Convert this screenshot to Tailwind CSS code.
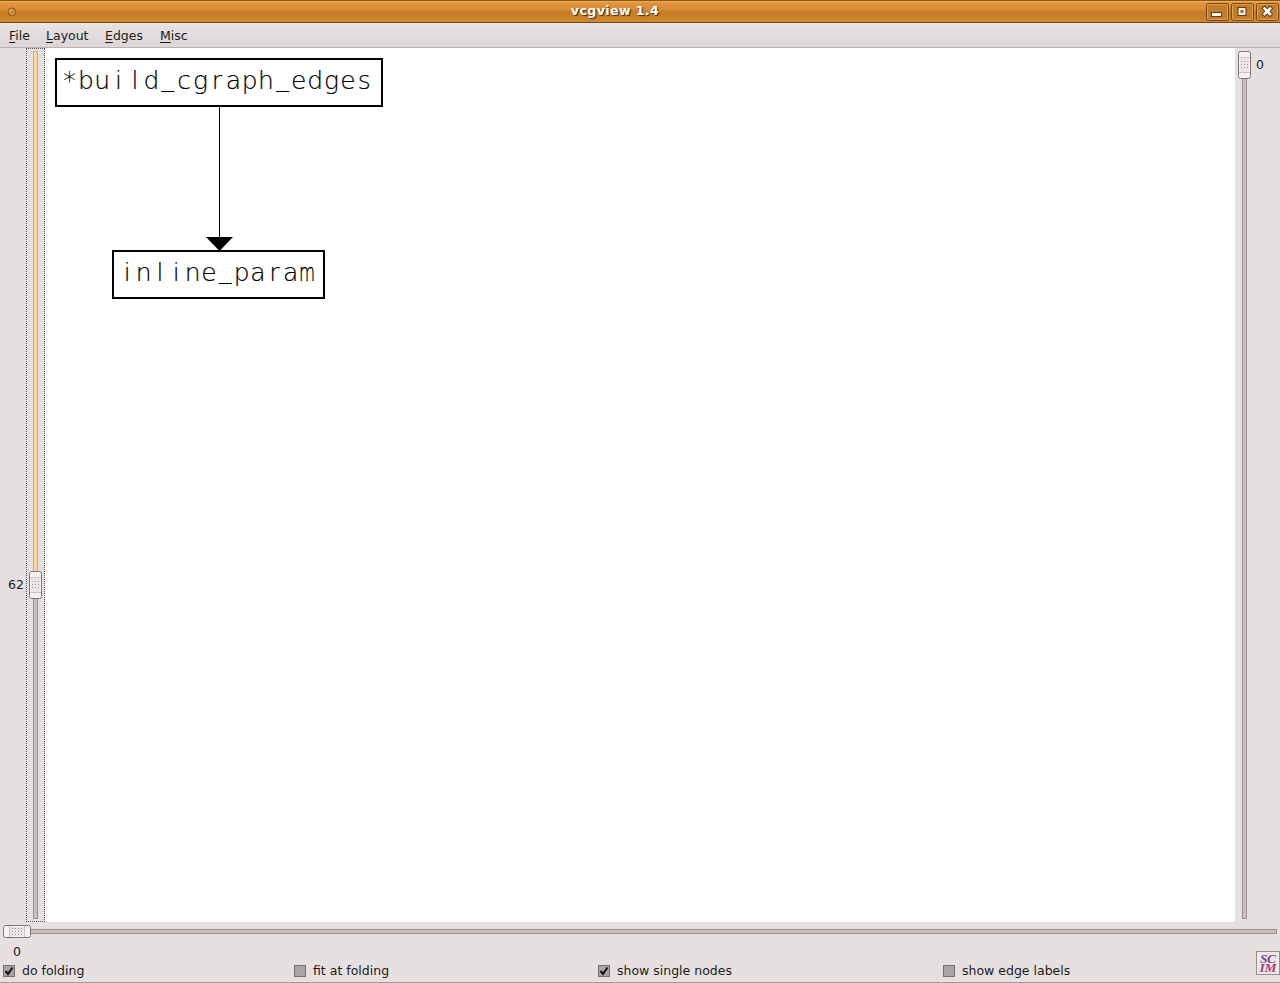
<!DOCTYPE html>
<html lang="en">
<head>
<meta charset="utf-8">
<title>vcgview 1.4</title>
<script src="https://cdn.jsdelivr.net/npm/@tailwindcss/browser@4"></script>
</head>
<body class="w-[1280px] h-[983px] overflow-hidden flex flex-col bg-[#e6e1e0] font-['DejaVu_Sans',sans-serif] text-[12.5px] leading-4 text-[#1a1a1a]">

<header class="h-[23px] shrink-0 flex items-center pl-[7px] pr-[1px] border-t border-b border-t-[#8b571c] border-b-[#714717] bg-[linear-gradient(#efb05a_0,#df943d_2px,#d98d35_8px,#c67c25_11px,#c68028_15px,#d18b2e_21px)]">
  <svg class="w-[10px] h-[10px]" viewBox="0 0 10 10"><circle cx="5" cy="5" r="4" fill="#cf8a3c" stroke="#8d581d"/><path d="M2.5 5A2.5 2.5 0 0 1 5 2.5" fill="none" stroke="#efbd7a"/></svg>
  <h1 class="flex-1 pl-[7px] pb-[2px] text-center text-[12.5px] tracking-[0.45px] font-bold text-white [text-shadow:1px_1px_1px_#3b2509]">vcgview 1.4</h1>
  <div class="flex gap-[2px] pt-[1px]">
    <svg class="w-[23px] h-[18px]" viewBox="0 0 23 18"><rect x=".5" y=".5" width="22" height="17" rx="2" fill="#c37d2b" stroke="#754512"/><rect x="1.5" y="1.5" width="20" height="15" rx="1" fill="none" stroke="#dfa050"/><rect x="5" y="9" width="11" height="5" fill="#633d10"/><rect x="6" y="10" width="9" height="3" fill="#fff"/></svg>
    <svg class="w-[23px] h-[18px]" viewBox="0 0 23 18"><rect x=".5" y=".5" width="22" height="17" rx="2" fill="#c37d2b" stroke="#754512"/><rect x="1.5" y="1.5" width="20" height="15" rx="1" fill="none" stroke="#dfa050"/><rect x="6.500" y="4" width="9" height="9" fill="#633d10"/><rect x="8.500" y="6" width="5" height="5" fill="#a96820" stroke="#fff" stroke-width="1.800"/></svg>
    <svg class="w-[23px] h-[18px]" viewBox="0 0 23 18"><rect x=".5" y=".5" width="22" height="17" rx="2" fill="#c37d2b" stroke="#754512"/><rect x="1.5" y="1.5" width="20" height="15" rx="1" fill="none" stroke="#dfa050"/><path d="M8.500 5.500l5.500 5.500M14 5.500l-5.500 5.500" stroke="#633d10" stroke-width="4.500" stroke-linecap="square"/><path d="M8.500 5.500l5.500 5.500M14 5.500l-5.500 5.500" stroke="#fff" stroke-width="2.600" stroke-linecap="square"/></svg>
  </div>
</header>

<nav class="h-[25px] shrink-0 flex items-center gap-[16px] pl-[9px] pt-[2px] border-b border-[#bcb0b0] bg-linear-to-b from-[#e8e4e3] to-[#dcd7d6]">
  <span class="w-[21px] whitespace-nowrap"><u class="underline-offset-2">F</u>ile</span>
  <span class="w-[43px] whitespace-nowrap"><u class="underline-offset-2">L</u>ayout</span>
  <span class="w-[39px] whitespace-nowrap"><u class="underline-offset-2">E</u>dges</span>
  <span class="whitespace-nowrap"><u class="underline-offset-2">M</u>isc</span>
</nav>

<main class="h-[874px] shrink-0 flex">
  <div class="w-[26px] pt-[529px] pr-[2px] text-right">62</div>
  <div class="w-[19px] flex flex-col items-center border border-dotted border-[#555] pt-[2px] pb-[2px]">
    <div class="w-[5px] h-[520px] border border-b-0 border-[#e0a860] bg-[#fdd5a0]"></div>
    <svg class="w-[13px] h-[28px] shrink-0" viewBox="0 0 13 28"><rect x=".5" y=".5" width="12" height="27" rx="2" fill="#f5f3f2" stroke="#7d7676"/><path d="M2 7h9v14H2z" fill="#e9e6e5"/><path d="M1 6.500h11M1 21.500h11" stroke="#cbc5c4"/><path d="M3 10.500h8M3 13.500h8M3 16.500h8" stroke="#a29b9a" stroke-dasharray="1 2"/></svg>
    <div class="w-[5px] flex-1 border border-t-0 border-[#9b9191] bg-[#c8bfbe]"></div>
  </div>
  <section class="w-[1190px] relative bg-white text-black">
    <svg class="absolute left-[161px] top-[58px] w-[28px] h-[144px]" viewBox="0 0 28 144"><path d="M13.500 0v132" stroke="#000"/><path d="M0 131h27L14.500 144h-2z"/></svg>
    <div class="absolute left-[10px] top-[10px] w-[328px] h-[49px] border-2 border-black">
      <svg class="w-[324px] h-[45px] font-['DejaVu_Sans'] font-extralight text-[25px]" viewBox="0 0 324 45"><text stroke="#000" stroke-width=".2" text-anchor="middle" x="12.500 28.900 45.300 61.600 78 94.400 110.800 127.200 143.500 159.900 176.300 192.700 209 225.400 241.800 258.200 274.600 290.900 307.300" y="29 29 29 29 29 29 26 29 29 29 29 29 29 26 29 29 29 29 29">*build_cgraph_edges</text></svg>
    </div>
    <div class="absolute left-[67px] top-[202px] w-[213px] h-[49px] border-2 border-black">
      <svg class="w-[209px] h-[45px] font-['DejaVu_Sans'] font-extralight text-[25px]" viewBox="0 0 209 45"><text stroke="#000" stroke-width=".2" text-anchor="middle" x="13.300 29.700 46 62.300 78.700 95 111.300 127.700 144 160.300 176.700" y="29 29 29 29 29 29 26 29 29 29 29">inline_para</text><text transform="translate(193 29) scale(.66 1)" stroke="#000" stroke-width=".4" text-anchor="middle">m</text></svg>
    </div>
  </section>
  <div class="w-[19px] flex flex-col items-center pt-[3px] pb-[3px]">
    <svg class="w-[13px] h-[28px] shrink-0" viewBox="0 0 13 28"><rect x=".5" y=".5" width="12" height="27" rx="2" fill="#f5f3f2" stroke="#7d7676"/><path d="M2 7h9v14H2z" fill="#e9e6e5"/><path d="M1 6.500h11M1 21.500h11" stroke="#cbc5c4"/><path d="M3 10.500h8M3 13.500h8M3 16.500h8" stroke="#a29b9a" stroke-dasharray="1 2"/></svg>
    <div class="w-[5px] flex-1 border border-t-0 border-[#9b9191] bg-[#c8bfbe]"></div>
  </div>
  <div class="pl-[2px] pt-[9px]">0</div>
</main>

<div class="h-[19px] shrink-0 flex items-center px-[3px]">
  <svg class="w-[28px] h-[13px] shrink-0" viewBox="0 0 28 13"><rect x=".5" y=".5" width="27" height="12" rx="2" fill="#f5f3f2" stroke="#7d7676"/><path d="M7 2h14v9H7z" fill="#e9e6e5"/><path d="M6.500 1v11M21.500 1v11" stroke="#cbc5c4"/><path d="M9 3.500h11M9 6.500h11M9 9.500h11" stroke="#a29b9a" stroke-dasharray="1 2"/></svg>
  <div class="h-[5px] flex-1 border border-l-0 border-[#9b9191] bg-[#c8bfbe]"></div>
</div>

<footer class="flex-1 flex flex-col border-b border-[#a49a99] relative">
  <div class="h-[20px] pl-[13px] pt-[3px]">0</div>
  <div class="h-[18px] flex items-center pl-[3px] pt-[2px]">
    <label class="w-[291px] flex items-center gap-[7px]"><svg class="w-[12px] h-[12px]" viewBox="0 0 12 12"><rect x=".5" y=".5" width="11" height="11" fill="#aaa5a4" stroke="#777170"/><path d="M2.500 6l2.500 3 4.500-6.500" fill="none" stroke="#111" stroke-width="2"/></svg>do folding</label>
    <label class="w-[304px] flex items-center gap-[7px]"><svg class="w-[12px] h-[12px]" viewBox="0 0 12 12"><rect x=".5" y=".5" width="11" height="11" fill="#aaa5a4" stroke="#777170"/></svg>fit at folding</label>
    <label class="w-[345px] flex items-center gap-[7px]"><svg class="w-[12px] h-[12px]" viewBox="0 0 12 12"><rect x=".5" y=".5" width="11" height="11" fill="#aaa5a4" stroke="#777170"/><path d="M2.500 6l2.500 3 4.500-6.500" fill="none" stroke="#111" stroke-width="2"/></svg>show single nodes</label>
    <label class="flex items-center gap-[7px]"><svg class="w-[12px] h-[12px]" viewBox="0 0 12 12"><rect x=".5" y=".5" width="11" height="11" fill="#aaa5a4" stroke="#777170"/></svg>show edge labels</label>
  </div>
  <svg class="absolute right-0 top-[10px] w-[24px] h-[24px] font-['Liberation_Serif',serif] italic font-bold text-[13.5px]" viewBox="0 0 24 24">
    <defs><linearGradient id="ime" x1="0" y1="0" x2="24" y2="24" gradientUnits="userSpaceOnUse"><stop offset="0" stop-color="#4650b8"/><stop offset="1" stop-color="#e02c50"/></linearGradient></defs>
    <rect x=".5" y=".5" width="23" height="23" fill="#eeeae9" stroke="#999184"/>
    <text x="4" y="11.500" textLength="16" fill="url(#ime)">SC</text><text x="3.500" y="21" textLength="17" fill="url(#ime)">IM</text>
  </svg>
</footer>
</body>
</html>
